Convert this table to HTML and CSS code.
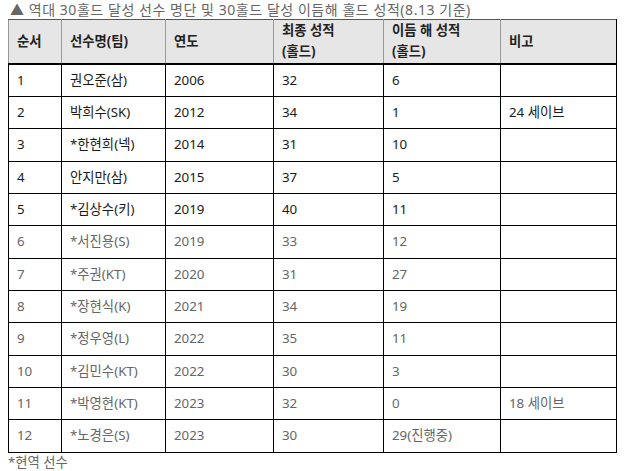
FILE: index.html
```html
<!DOCTYPE html>
<html lang="ko">
<head>
<meta charset="utf-8">
<title>역대 30홀드 달성 선수</title>
<link rel="stylesheet" href="styles.css">
</head>
<body>
<p class="caption">▲ 역대 30홀드 달성 선수 명단 및 30홀드 달성 이듬해 홀드 성적(8.13 기준)</p>
<table class="stats">
  <colgroup>
    <col class="c1"><col class="c2"><col class="c3"><col class="c4"><col class="c5"><col class="c6">
  </colgroup>
  <thead>
    <tr>
      <th>순서</th>
      <th>선수명(팀)</th>
      <th>연도</th>
      <th>최종 성적<br>(홀드)</th>
      <th>이듬 해 성적<br>(홀드)</th>
      <th>비고</th>
    </tr>
  </thead>
  <tbody>
    <tr class="dark"><td>1</td><td>권오준(삼)</td><td>2006</td><td>32</td><td>6</td><td></td></tr>
    <tr class="dark"><td>2</td><td>박희수(SK)</td><td>2012</td><td>34</td><td>1</td><td>24 세이브</td></tr>
    <tr class="dark"><td>3</td><td>*한현희(넥)</td><td>2014</td><td>31</td><td>10</td><td></td></tr>
    <tr class="dark"><td>4</td><td>안지만(삼)</td><td>2015</td><td>37</td><td>5</td><td></td></tr>
    <tr class="dark"><td>5</td><td>*김상수(키)</td><td>2019</td><td>40</td><td>11</td><td></td></tr>
    <tr class="light"><td>6</td><td>*서진용(S)</td><td>2019</td><td>33</td><td>12</td><td></td></tr>
    <tr class="light"><td>7</td><td>*주권(KT)</td><td>2020</td><td>31</td><td>27</td><td></td></tr>
    <tr class="light"><td>8</td><td>*장현식(K)</td><td>2021</td><td>34</td><td>19</td><td></td></tr>
    <tr class="light"><td>9</td><td>*정우영(L)</td><td>2022</td><td>35</td><td>11</td><td></td></tr>
    <tr class="light"><td>10</td><td>*김민수(KT)</td><td>2022</td><td>30</td><td>3</td><td></td></tr>
    <tr class="light"><td>11</td><td>*박영현(KT)</td><td>2023</td><td>32</td><td>0</td><td>18 세이브</td></tr>
    <tr class="light"><td>12</td><td>*노경은(S)</td><td>2023</td><td>30</td><td>29(진행중)</td><td></td></tr>
  </tbody>
</table>
<p class="note">*현역 선수</p>
</body>
</html>
```

FILE: styles.css
```css
html, body {
  background: #ffffff;
}
body {
  margin: 0 8px;
  font-family: "Noto Sans", "Noto Sans CJK KR", sans-serif;
  font-size: 13.33px;
  color: #222;
}
.caption {
  margin: 0 0 0 2px;
  font-size: 14px;
  letter-spacing: 0.55px;
  line-height: 19px;
  color: #666;
  white-space: nowrap;
}
.stats {
  width: 100%;
  border-collapse: collapse;
  table-layout: fixed;
  line-height: 21.33px;
}
.c1 { width: 53px; }
.c2 { width: 104px; }
.c3 { width: 108px; }
.c4 { width: 110px; }
.c5 { width: 117px; }
.c6 { width: auto; }
.stats th {
  background: #e6e6e6;
  font-weight: bold;
  text-align: left;
  padding: 0 8px;
  height: 42px;
  border: 1px solid #999;
  border-top-color: #555;
  border-bottom: 2px solid #000;
  color: #222;
}
.stats th:last-child {
  border-right-color: #000;
}
.stats td {
  padding: 5px 8px;
  border: 1px solid #000;
  white-space: nowrap;
}
.stats tr.dark td {
  color: #1a1a1a;
}
.stats tr.light td {
  color: #666;
}
.note {
  margin: 0;
  line-height: 19px;
  color: #666;
}
```
